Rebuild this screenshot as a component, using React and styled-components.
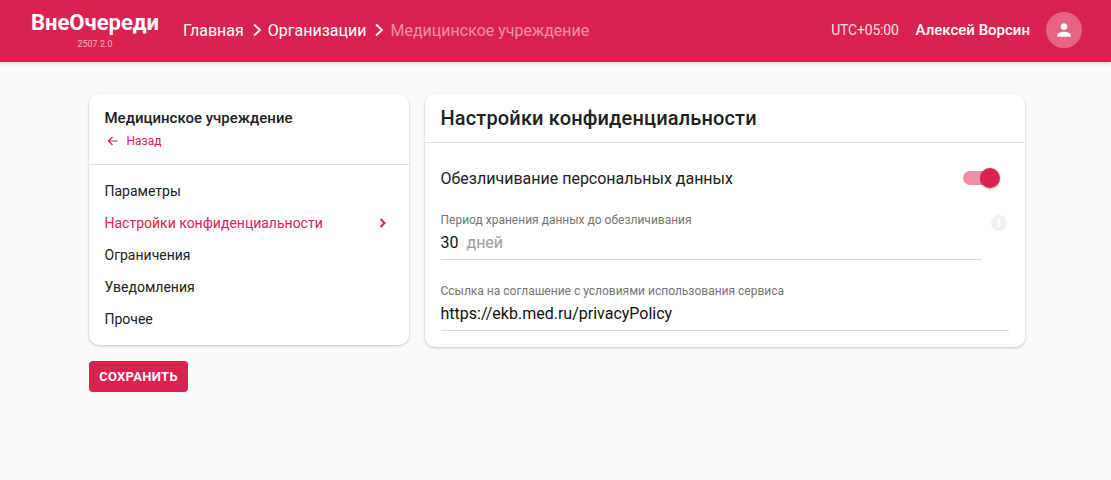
import React from 'react';
import styled, { createGlobalStyle } from 'styled-components';

const GlobalStyle = createGlobalStyle`
  html, body {
    margin: 0;
    padding: 0;
    background: #fafafa;
    font-family: Roboto, "Noto Sans", sans-serif;
  }
  * { box-sizing: border-box; }
`;

const Page = styled.div`
  width: 1111px;
  height: 480px;
  overflow: hidden;
`;

const Header = styled.header`
  height: 62px;
  background: #da2250;
  display: flex;
  align-items: center;
  padding: 0 29px 2px 31px;
  color: #fff;
  box-shadow: 0 2px 4px rgba(0, 0, 0, 0.12);
`;

const Logo = styled.div`
  width: 128px;
  display: flex;
  flex-direction: column;
  align-items: center;
  margin-right: 24px;
`;

const LogoName = styled.div`
  font-size: 22px;
  font-weight: 700;
  line-height: 24px;
  white-space: nowrap;
`;

const Version = styled.div`
  font-size: 9px;
  line-height: 10px;
  margin-top: 4px;
  color: rgba(255, 255, 255, 0.65);
`;

const Crumbs = styled.nav`
  display: flex;
  align-items: center;
  font-size: 16px;
  font-weight: 400;
  flex: 1;
`;

const Crumb = styled.span`
  color: ${p => (p.$current ? 'rgba(255, 255, 255, 0.5)' : '#fff')};
  white-space: nowrap;
`;

const CrumbArrow = styled.svg`
  width: 10px;
  height: 14px;
  margin: 0 6px 0 8px;
`;

const Zone = styled.span`
  font-size: 14px;
  letter-spacing: -0.2px;
  color: rgba(255, 255, 255, 0.85);
  margin-right: 17px;
`;

const UserName = styled.span`
  font-size: 15px;
  font-weight: 500;
  margin-right: 16px;
`;

const Avatar = styled.div`
  width: 36px;
  height: 36px;
  border-radius: 50%;
  background: rgba(255, 255, 255, 0.3);
  display: flex;
  align-items: center;
  justify-content: center;
`;

const Content = styled.main`
  display: flex;
  align-items: flex-start;
  gap: 16px;
  padding: 32px 0 0 89px;
`;

const Side = styled.div`
  width: 320px;
`;

const Card = styled.section`
  background: #fff;
  border-radius: 10px;
  box-shadow: 0 1px 3px rgba(0, 0, 0, 0.22);
`;

const SideHead = styled.div`
  height: 71px;
  padding: 15px 16px 0 15.5px;
  border-bottom: 1px solid #e0e0e0;
`;

const SideTitle = styled.div`
  font-size: 15px;
  font-weight: 500;
  line-height: 18px;
  color: #212121;
`;

const Back = styled.div`
  display: flex;
  align-items: center;
  gap: 8px;
  margin-top: 6px;
  padding-left: 2px;
  font-size: 12px;
  line-height: 16px;
  color: #da2250;
`;

const Menu = styled.nav`
  padding: 10px 0;
`;

const MenuItem = styled.div`
  height: 32px;
  padding: 0 22px 0 15.5px;
  display: flex;
  align-items: center;
  justify-content: space-between;
  font-size: 14px;
  color: ${p => (p.$active ? '#da2250' : '#212121')};
`;

const SaveButton = styled.button`
  display: block;
  height: 31px;
  width: 99px;
  margin-top: 16px;
  border: none;
  border-radius: 4px;
  background: #da2250;
  color: #fff;
  font-family: inherit;
  font-size: 13px;
  font-weight: 700;
  letter-spacing: 0.3px;
  padding: 0;
`;

const Panel = styled(Card)`
  width: 600px;
`;

const PanelTitle = styled.h2`
  margin: 0;
  height: 49px;
  padding: 0 15.5px 1px;
  display: flex;
  align-items: center;
  font-size: 20px;
  font-weight: 500;
  letter-spacing: 0.15px;
  color: #212121;
  border-bottom: 1px solid #e0e0e0;
`;

const PanelBody = styled.div`
  padding: 17px 16px 16px 15.5px;
`;

const ToggleRow = styled.div`
  height: 36px;
  display: flex;
  align-items: center;
  justify-content: space-between;
  font-size: 16px;
  color: #212121;
  padding-right: 12px;
`;

const Toggle = styled.div`
  position: relative;
  width: 34px;
  height: 14px;
  border-radius: 7px;
  background: #ee8fa8;
`;

const Knob = styled.span`
  position: absolute;
  right: -3px;
  top: -3px;
  width: 20px;
  height: 20px;
  border-radius: 50%;
  background: #da2250;
  box-shadow: 0 1px 2px rgba(0, 0, 0, 0.3);
`;

const FieldRow = styled.div`
  display: flex;
  align-items: flex-start;
  gap: 9px;
  margin-top: 17px;
  padding-right: 2px;
`;

const Field = styled.div`
  flex: 1;
  height: 47px;
  border-bottom: 1px solid #d9d9d9;
`;

const FieldLabel = styled.div`
  font-size: 12px;
  line-height: 14px;
  color: #757575;
`;

const FieldValue = styled.div`
  margin-top: 5px;
  font-size: 16px;
  line-height: 22px;
  color: #111;
`;

const Unit = styled.span`
  margin-left: 8px;
  color: #9e9e9e;
`;

const LinkField = styled(Field)`
  margin-top: 24px;
`;

const InfoBadge = styled.div`
  width: 16px;
  height: 16px;
  margin-top: 2px;
  border-radius: 50%;
  background: #f1f1f1;
  color: #fff;
  font-size: 12px;
  font-weight: 700;
  line-height: 16px;
  text-align: center;
  font-family: "Liberation Serif", serif;
`;

const Chevron = () => (
  <CrumbArrow viewBox="0 0 10 14" fill="none" stroke="#fff" strokeWidth="1.8">
    <path d="M2 1.5 L8 7 L2 12.5" />
  </CrumbArrow>
);

const items = ['Параметры', 'Настройки конфиденциальности', 'Ограничения', 'Уведомления', 'Прочее'];

export default function App() {
  return (
    <Page>
      <GlobalStyle />
      <Header>
        <Logo>
          <LogoName>ВнеОчереди</LogoName>
          <Version>2507.2.0</Version>
        </Logo>
        <Crumbs>
          <Crumb>Главная</Crumb>
          <Chevron />
          <Crumb>Организации</Crumb>
          <Chevron />
          <Crumb $current>Медицинское учреждение</Crumb>
        </Crumbs>
        <Zone>UTC+05:00</Zone>
        <UserName>Алексей Ворсин</UserName>
        <Avatar>
          <svg width="20" height="20" viewBox="0 0 24 24" fill="#fff">
            <path d="M12 12c2.2 0 4-1.8 4-4s-1.8-4-4-4-4 1.8-4 4 1.8 4 4 4zm0 2c-2.7 0-8 1.3-8 4v2h16v-2c0-2.7-5.3-4-8-4z" />
          </svg>
        </Avatar>
      </Header>
      <Content>
        <Side>
          <Card>
            <SideHead>
              <SideTitle>Медицинское учреждение</SideTitle>
              <Back>
                <svg width="12" height="12" viewBox="0 0 12 12" fill="none" stroke="#da2250" strokeWidth="1.2">
                  <path d="M10.5 6 H1.5 M5.5 2 L1.5 6 L5.5 10" />
                </svg>
                Назад
              </Back>
            </SideHead>
            <Menu>
              {items.map((item, i) => (
                <MenuItem key={item} $active={i === 1}>
                  {item}
                  {i === 1 && (
                    <svg width="8" height="10" viewBox="0 0 8 10" fill="none" stroke="#da2250" strokeWidth="2">
                      <path d="M1.5 1 L5.5 5 L1.5 9" />
                    </svg>
                  )}
                </MenuItem>
              ))}
            </Menu>
          </Card>
          <SaveButton>СОХРАНИТЬ</SaveButton>
        </Side>
        <Panel>
          <PanelTitle>Настройки конфиденциальности</PanelTitle>
          <PanelBody>
            <ToggleRow>
              Обезличивание персональных данных
              <Toggle><Knob /></Toggle>
            </ToggleRow>
            <FieldRow>
              <Field>
                <FieldLabel>Период хранения данных до обезличивания</FieldLabel>
                <FieldValue>30<Unit>дней</Unit></FieldValue>
              </Field>
              <InfoBadge>i</InfoBadge>
            </FieldRow>
            <LinkField>
              <FieldLabel>Ссылка на соглашение с условиями использования сервиса</FieldLabel>
              <FieldValue>https://ekb.med.ru/privacyPolicy</FieldValue>
            </LinkField>
          </PanelBody>
        </Panel>
      </Content>
    </Page>
  );
}
